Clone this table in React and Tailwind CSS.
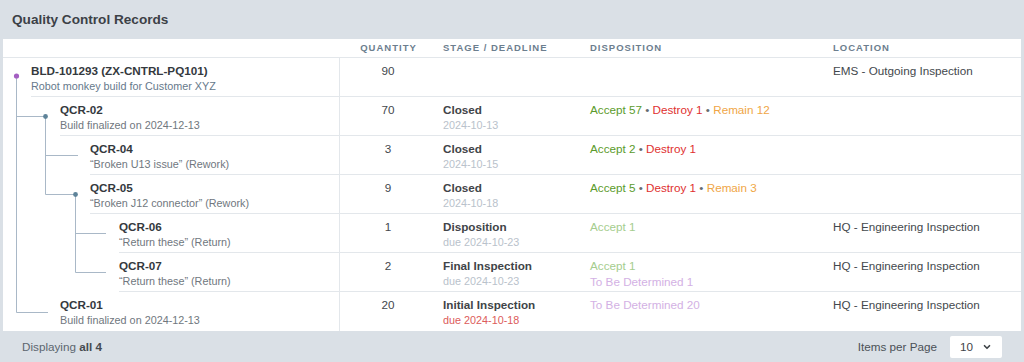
import { ChevronDown } from 'lucide-react'

const rows = [
  { indent: 28, name: 'BLD-101293 (ZX-CNTRL-PQ101)', sub: 'Robot monkey build for Customer XYZ', root: true, qty: 90, loc: 'EMS - Outgoing Inspection' },
  { indent: 57, name: 'QCR-02', sub: 'Build finalized on 2024-12-13', qty: 70, stage: 'Closed', date: '2024-10-13', disp: [['Accept 57', 'accept'], ['Destroy 1', 'destroy'], ['Remain 12', 'remain']] },
  { indent: 87, name: 'QCR-04', sub: '“Broken U13 issue” (Rework)', qty: 3, stage: 'Closed', date: '2024-10-15', disp: [['Accept 2', 'accept'], ['Destroy 1', 'destroy']] },
  { indent: 87, name: 'QCR-05', sub: '“Broken J12 connector” (Rework)', qty: 9, stage: 'Closed', date: '2024-10-18', disp: [['Accept 5', 'accept'], ['Destroy 1', 'destroy'], ['Remain 3', 'remain']] },
  { indent: 116, name: 'QCR-06', sub: '“Return these” (Return)', qty: 1, stage: 'Disposition', date: 'due 2024-10-23', disp: [['Accept 1', 'pending']], loc: 'HQ - Engineering Inspection' },
  { indent: 116, name: 'QCR-07', sub: '“Return these” (Return)', qty: 2, stage: 'Final Inspection', date: 'due 2024-10-23', lines: [['Accept 1', 'pending'], ['To Be Determined 1', 'tbd']], loc: 'HQ - Engineering Inspection' },
  { indent: 57, name: 'QCR-01', sub: 'Build finalized on 2024-12-13', qty: 20, stage: 'Initial Inspection', date: 'due 2024-10-18', late: true, lines: [['To Be Determined 20', 'tbd']], loc: 'HQ - Engineering Inspection', last: true },
]

const tone = {
  accept: 'text-[#5b9b2c]',
  destroy: 'text-[#e0302f]',
  remain: 'text-[#f0a646]',
  pending: 'text-[#a5cd8e]',
  tbd: 'text-[#d3b1e4]',
}

function Disposition({ row }) {
  if (row.lines) {
    return (
      <div className="leading-[16px]">
        {row.lines.map(([t, k]) => (
          <div key={t} className={tone[k]}>{t}</div>
        ))}
      </div>
    )
  }
  if (!row.disp) return null
  return (
    <div className="leading-[16px]">
      {row.disp.map(([t, k], i) => (
        <span key={t}>
          {i > 0 && <span className="text-[#666b70]"> • </span>}
          <span className={tone[k]}>{t}</span>
        </span>
      ))}
    </div>
  )
}

function TreeLines() {
  // offsets relative to the table body (page x 3, y 59)
  const c = '#a9b8c7'
  return (
    <svg className="pointer-events-none absolute left-0 top-0" width="120" height="272">
      <g stroke={c} strokeWidth="1" fill="none">
        <path d="M13.5 18 V254.5 H45" />
        <path d="M13.5 58.5 H42.5 V136.5" />
        <path d="M42.5 97.5 H75" />
        <path d="M42.5 136.5 H72.5 V214.5" />
        <path d="M72.5 175.5 H103" />
        <path d="M72.5 214.5 H103" />
      </g>
      <circle cx="13.5" cy="18" r="2.6" fill="#a45fc2" />
      <circle cx="42.5" cy="58.5" r="2.4" fill="#5e8399" />
      <circle cx="72.5" cy="136.5" r="2.4" fill="#5e8399" />
    </svg>
  )
}

export default function App() {
  return (
    <div className="w-[1024px] h-[362px] bg-[#dae0e6] font-['Liberation_Sans',Arial,sans-serif] text-[11.7px] text-[#43484d] flex flex-col">
      <div className="h-[40px] flex items-center px-3 text-[13.6px] font-bold text-[#3c4146]">
        Quality Control Records
      </div>
      <div className="mx-[3px] bg-white flex-1 flex flex-col">
        <div className="grid grid-cols-[337px_96px_147px_243px_1fr] h-[19px] border-b border-[#e3e7eb] items-center text-[9.5px] font-bold tracking-[1px] text-[#6c7e8e] uppercase">
          <div />
          <div className="text-center pl-[1px]">Quantity</div>
          <div className="pl-[7px]">Stage / Deadline</div>
          <div className="pl-[7px]">Disposition</div>
          <div className="pl-[7px]">Location</div>
        </div>
        <div className="relative flex-1">
          <TreeLines />
          {rows.map((r) => (
            <div key={r.name} className="grid grid-cols-[337px_96px_147px_243px_1fr] h-[39px]">
              <div className="border-r border-[#e3e7eb]" style={{ paddingLeft: r.indent }}>
                <div className={`h-full pt-[6px] ${r.last ? '' : 'border-b border-[#e3e7eb]'}`}>
                  <div className="font-bold text-[#34393e] leading-[14px]">{r.name}</div>
                  <div className={`text-[10.8px] leading-[16px] ${r.root ? 'text-[#66798b]' : 'text-[#70777e]'}`}>{r.sub}</div>
                </div>
              </div>
              <div className={`text-center pt-[6px] leading-[14px] ${r.last ? '' : 'border-b border-[#e3e7eb]'}`}>{r.qty}</div>
              <div className={`pl-[7px] pt-[6px] ${r.last ? '' : 'border-b border-[#e3e7eb]'}`}>
                {r.stage && (
                  <>
                    <div className="font-bold text-[#3f4448] leading-[14px]">{r.stage}</div>
                    <div className={`text-[10.8px] leading-[16px] ${r.late ? 'text-[#dc5b5b]' : 'text-[#b9c2cb]'}`}>{r.date}</div>
                  </>
                )}
              </div>
              <div className={`pl-[7px] pt-[5px] ${r.last ? '' : 'border-b border-[#e3e7eb]'}`}>
                <Disposition row={r} />
              </div>
              <div className={`pl-[7px] pt-[6px] leading-[14px] text-[#43484d] ${r.last ? '' : 'border-b border-[#e3e7eb]'}`}>{r.loc}</div>
            </div>
          ))}
        </div>
      </div>
      <div className="h-[31px] flex items-center pl-[22px] pr-[22px] text-[11.7px]">
        <div className="text-[#5c666f]">
          Displaying <span className="font-bold text-[#464b50]">all 4</span>
        </div>
        <div className="ml-auto flex items-center gap-[13px] text-[#4b5157]">
          <span>Items per Page</span>
          <div className="w-[52px] h-[22px] bg-white rounded-[2px] flex items-center pl-[10px] gap-[9px] text-[#3f4448]">
            <span>10</span>
            <ChevronDown size={10} strokeWidth={4} />
          </div>
        </div>
      </div>
    </div>
  )
}
